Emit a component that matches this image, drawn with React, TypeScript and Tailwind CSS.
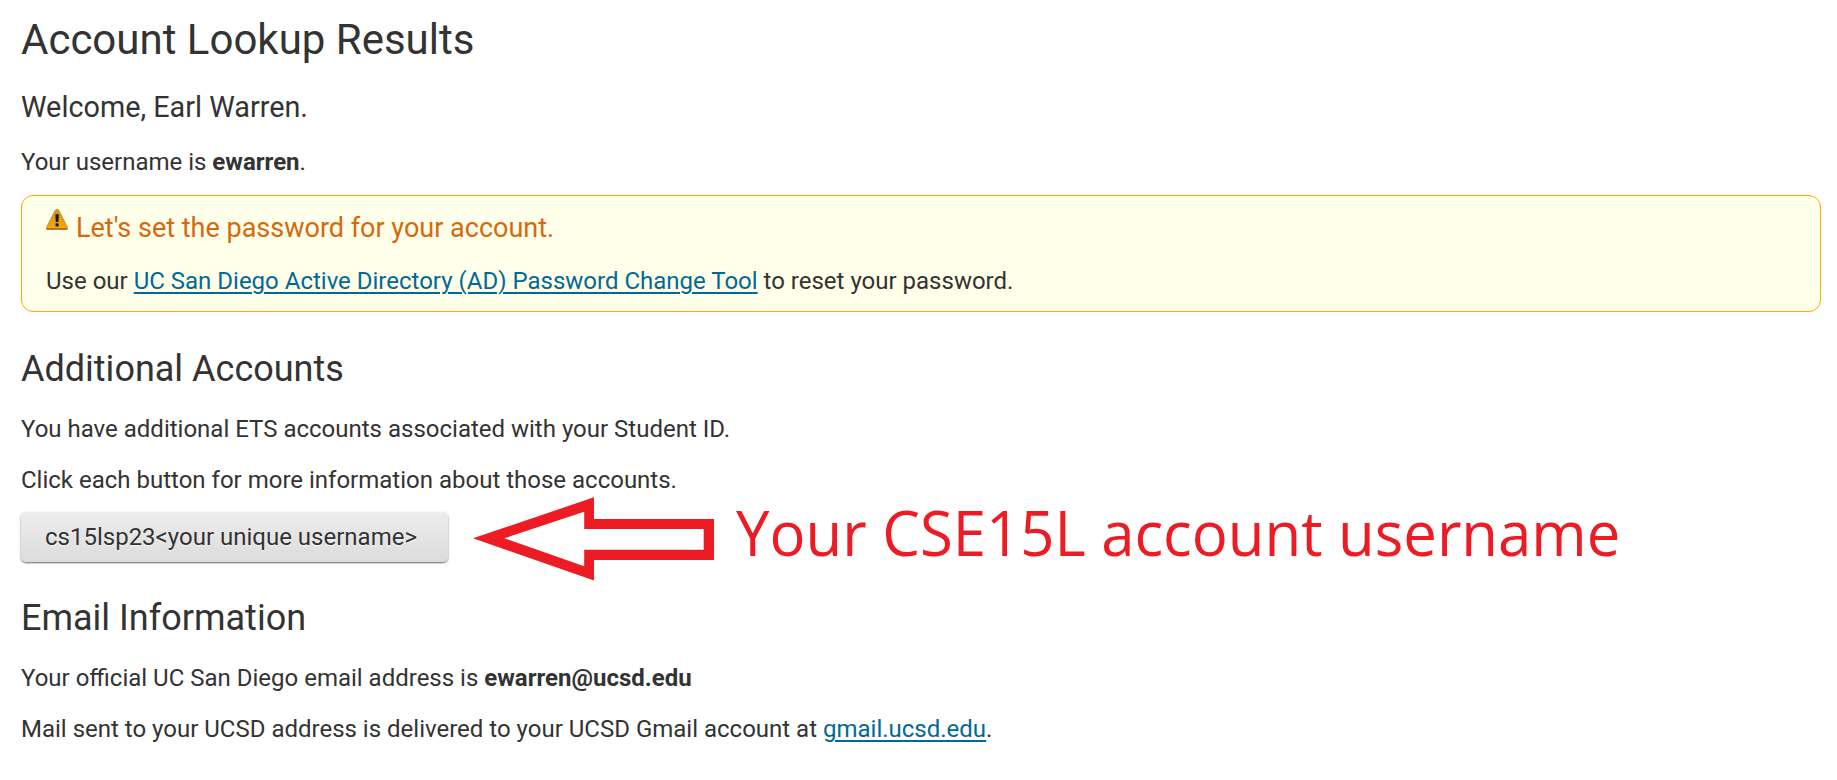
import type { ReactNode } from "react";

function WarningIcon() {
  return (
    <svg width="22" height="21" viewBox="0 0 22 21" className="shrink-0" aria-hidden="true">
      <defs>
        <linearGradient id="warn" x1="0" y1="0" x2="0" y2="1">
          <stop offset="0" stopColor="#d98f22" />
          <stop offset="1" stopColor="#f7a900" />
        </linearGradient>
      </defs>
      <path d="M9.3 1.2Q11 -.4 12.7 1.2L21.2 18V20H.8V18Z" fill="url(#warn)" stroke="#c98a2c" strokeWidth="1" />
      <path d="M.5 20H21.5" stroke="#b06a10" strokeWidth="1.6" />
      <path d="M9.4 5.2H12.8L12.4 13H9.8Z" fill="#111" />
      <rect x="9.6" y="14.4" width="3" height="3" fill="#111" />
    </svg>
  );
}

function Arrow() {
  return (
    <svg width="241" height="84" viewBox="473 495 241 84" className="ml-[25px] shrink-0 overflow-visible" aria-hidden="true">
      <path
        fillRule="evenodd"
        fill="#ed1c24"
        d="M473 538.3L594 497.3V519H714V560H594V580.5ZM504.3 538.3L584.2 566.3V549.7H703.7V529H584.2V511.7Z"
      />
    </svg>
  );
}

function Link({ children }: { children: ReactNode }) {
  return (
    <a href="#" className="text-[#006a96] underline decoration-2 underline-offset-[3px]">
      {children}
    </a>
  );
}

export default function App() {
  return (
    <main className="h-[780px] overflow-hidden bg-white pt-[13px] pr-4 pl-[21px] font-['Roboto',sans-serif] text-[24px] leading-[36px] whitespace-nowrap text-[#333]">
      <h1 className="text-[42px] leading-[54px]">Account Lookup Results</h1>
      <h3 className="mt-[22px] text-[28.8px]">Welcome, Earl Warren.</h3>
      <p className="mt-[19px]">
        Your username is <strong className="font-bold">ewarren</strong>.
      </p>

      <section className="mt-[15px] h-[117px] rounded-[12px] border border-[#ffa800] bg-[#ffffea] px-6 pt-[13px]">
        <div className="flex gap-2">
          <WarningIcon />
          <h4 className="pt-px text-[27px] text-[#d6680d]">Let's set the password for your account.</h4>
        </div>
        <p className="mt-[17px]">
          Use our <Link>UC San Diego Active Directory (AD) Password Change Tool</Link> to reset your password.
        </p>
      </section>

      <h2 className="mt-[35px] text-[36px] leading-[44px]">Additional Accounts</h2>
      <p className="mt-5">You have additional ETS accounts associated with your Student ID.</p>
      <p className="mt-[15px]">Click each button for more information about those accounts.</p>

      <div className="mt-[14px] flex h-[50px] items-center">
        <button className="h-[50px] w-[427px] shrink-0 rounded-[5px] bg-linear-to-b from-[#ededed] to-[#dcdcdc] pl-6 text-left shadow-[0_1px_2px_rgba(0,0,0,0.6)] text-shadow-[0_1px_2px_rgba(255,255,255,0.75)]">
          cs15lsp23&lt;your unique username&gt;
        </button>
        <Arrow />
        <span className="ml-[22px] origin-left scale-x-95 pb-[11px] font-['Open_Sans',sans-serif] text-[63px] leading-[84px] text-[#ed1c24]">
          Your CSE15L account username
        </span>
      </div>

      <h2 className="mt-[34px] text-[36px] leading-[44px]">Email Information</h2>
      <p className="mt-5">
        Your official UC San Diego email address is <strong className="font-bold">ewarren@ucsd.edu</strong>
      </p>
      <p className="mt-[15px]">
        Mail sent to your UCSD address is delivered to your UCSD Gmail account at <Link>gmail.ucsd.edu</Link>.
      </p>
    </main>
  );
}
